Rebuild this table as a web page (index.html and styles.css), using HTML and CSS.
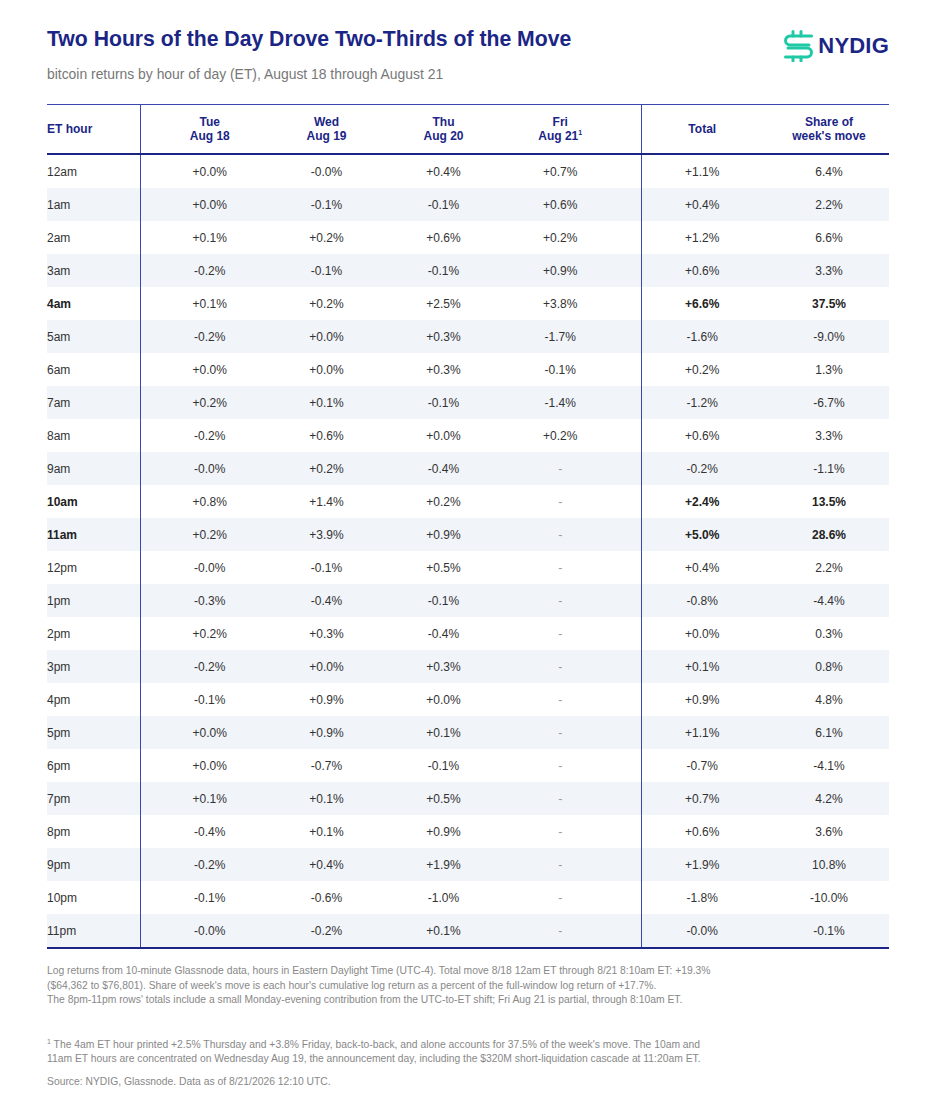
FILE: index.html
```html
<!DOCTYPE html>
<html>
<head>
<meta charset="utf-8">
<link rel="stylesheet" href="styles.css">
</head>
<body>
<div class="page">
  <header class="head">
    <div class="titles">
      <h1 class="title">Two Hours of the Day Drove Two-Thirds of the Move</h1>
      <p class="subtitle">bitcoin returns by hour of day (ET), August 18 through August 21</p>
    </div>
    <div class="logo">
      <svg class="logo-mark" width="31" height="32" viewBox="0 0 31 32" fill="none" stroke="#20c9a6" stroke-width="3" stroke-linecap="round" stroke-linejoin="round">
        <path d="M28.5 6 H7 a4.5 4.5 0 0 0 -4.5 4.5 v0 a4.5 4.5 0 0 0 4.5 4.5 H26"/>
        <path d="M5 18 H24 a4.5 4.5 0 0 1 4.5 4.5 v0 a4.5 4.5 0 0 1 -4.5 4.5 H2.5"/>
        <path d="M10 1.5 V6 M18 1.5 V6 M10 27 V31 M18 27 V31"/>
      </svg>
      <span class="logo-text">NYDIG</span>
    </div>
  </header>

  <table class="grid">
    <colgroup>
      <col class="c-hour"><col class="c-tue"><col class="c-mid"><col class="c-mid"><col class="c-fri"><col class="c-total"><col class="c-share">
    </colgroup>
    <thead>
      <tr>
        <th class="hour">ET hour</th>
        <th class="tue">Tue<br>Aug 18</th>
        <th>Wed<br>Aug 19</th>
        <th>Thu<br>Aug 20</th>
        <th class="fri">Fri<br>Aug 21<sup>1</sup></th>
        <th class="total">Total</th>
        <th>Share of<br>week's move</th>
      </tr>
    </thead>
    <tbody>
      <tr><td class="hour">12am</td><td class="tue">+0.0%</td><td>-0.0%</td><td>+0.4%</td><td class="fri">+0.7%</td><td class="total">+1.1%</td><td>6.4%</td></tr>
      <tr><td class="hour">1am</td><td class="tue">+0.0%</td><td>-0.1%</td><td>-0.1%</td><td class="fri">+0.6%</td><td class="total">+0.4%</td><td>2.2%</td></tr>
      <tr><td class="hour">2am</td><td class="tue">+0.1%</td><td>+0.2%</td><td>+0.6%</td><td class="fri">+0.2%</td><td class="total">+1.2%</td><td>6.6%</td></tr>
      <tr><td class="hour">3am</td><td class="tue">-0.2%</td><td>-0.1%</td><td>-0.1%</td><td class="fri">+0.9%</td><td class="total">+0.6%</td><td>3.3%</td></tr>
      <tr class="hi"><td class="hour">4am</td><td class="tue">+0.1%</td><td>+0.2%</td><td>+2.5%</td><td class="fri">+3.8%</td><td class="total">+6.6%</td><td>37.5%</td></tr>
      <tr><td class="hour">5am</td><td class="tue">-0.2%</td><td>+0.0%</td><td>+0.3%</td><td class="fri">-1.7%</td><td class="total">-1.6%</td><td>-9.0%</td></tr>
      <tr><td class="hour">6am</td><td class="tue">+0.0%</td><td>+0.0%</td><td>+0.3%</td><td class="fri">-0.1%</td><td class="total">+0.2%</td><td>1.3%</td></tr>
      <tr><td class="hour">7am</td><td class="tue">+0.2%</td><td>+0.1%</td><td>-0.1%</td><td class="fri">-1.4%</td><td class="total">-1.2%</td><td>-6.7%</td></tr>
      <tr><td class="hour">8am</td><td class="tue">-0.2%</td><td>+0.6%</td><td>+0.0%</td><td class="fri">+0.2%</td><td class="total">+0.6%</td><td>3.3%</td></tr>
      <tr><td class="hour">9am</td><td class="tue">-0.0%</td><td>+0.2%</td><td>-0.4%</td><td class="fri na">-</td><td class="total">-0.2%</td><td>-1.1%</td></tr>
      <tr class="hi"><td class="hour">10am</td><td class="tue">+0.8%</td><td>+1.4%</td><td>+0.2%</td><td class="fri na">-</td><td class="total">+2.4%</td><td>13.5%</td></tr>
      <tr class="hi"><td class="hour">11am</td><td class="tue">+0.2%</td><td>+3.9%</td><td>+0.9%</td><td class="fri na">-</td><td class="total">+5.0%</td><td>28.6%</td></tr>
      <tr><td class="hour">12pm</td><td class="tue">-0.0%</td><td>-0.1%</td><td>+0.5%</td><td class="fri na">-</td><td class="total">+0.4%</td><td>2.2%</td></tr>
      <tr><td class="hour">1pm</td><td class="tue">-0.3%</td><td>-0.4%</td><td>-0.1%</td><td class="fri na">-</td><td class="total">-0.8%</td><td>-4.4%</td></tr>
      <tr><td class="hour">2pm</td><td class="tue">+0.2%</td><td>+0.3%</td><td>-0.4%</td><td class="fri na">-</td><td class="total">+0.0%</td><td>0.3%</td></tr>
      <tr><td class="hour">3pm</td><td class="tue">-0.2%</td><td>+0.0%</td><td>+0.3%</td><td class="fri na">-</td><td class="total">+0.1%</td><td>0.8%</td></tr>
      <tr><td class="hour">4pm</td><td class="tue">-0.1%</td><td>+0.9%</td><td>+0.0%</td><td class="fri na">-</td><td class="total">+0.9%</td><td>4.8%</td></tr>
      <tr><td class="hour">5pm</td><td class="tue">+0.0%</td><td>+0.9%</td><td>+0.1%</td><td class="fri na">-</td><td class="total">+1.1%</td><td>6.1%</td></tr>
      <tr><td class="hour">6pm</td><td class="tue">+0.0%</td><td>-0.7%</td><td>-0.1%</td><td class="fri na">-</td><td class="total">-0.7%</td><td>-4.1%</td></tr>
      <tr><td class="hour">7pm</td><td class="tue">+0.1%</td><td>+0.1%</td><td>+0.5%</td><td class="fri na">-</td><td class="total">+0.7%</td><td>4.2%</td></tr>
      <tr><td class="hour">8pm</td><td class="tue">-0.4%</td><td>+0.1%</td><td>+0.9%</td><td class="fri na">-</td><td class="total">+0.6%</td><td>3.6%</td></tr>
      <tr><td class="hour">9pm</td><td class="tue">-0.2%</td><td>+0.4%</td><td>+1.9%</td><td class="fri na">-</td><td class="total">+1.9%</td><td>10.8%</td></tr>
      <tr><td class="hour">10pm</td><td class="tue">-0.1%</td><td>-0.6%</td><td>-1.0%</td><td class="fri na">-</td><td class="total">-1.8%</td><td>-10.0%</td></tr>
      <tr><td class="hour">11pm</td><td class="tue">-0.0%</td><td>-0.2%</td><td>+0.1%</td><td class="fri na">-</td><td class="total">-0.0%</td><td>-0.1%</td></tr>
    </tbody>
  </table>

  <div class="notes">
    <p class="note">Log returns from 10-minute Glassnode data, hours in Eastern Daylight Time (UTC-4). Total move 8/18 12am ET through 8/21 8:10am ET: +19.3%<br>($64,362 to $76,801). Share of week's move is each hour's cumulative log return as a percent of the full-window log return of +17.7%.<br>The 8pm-11pm rows' totals include a small Monday-evening contribution from the UTC-to-ET shift; Fri Aug 21 is partial, through 8:10am ET.</p>
    <p class="note footnote"><sup>1</sup> The 4am ET hour printed +2.5% Thursday and +3.8% Friday, back-to-back, and alone accounts for 37.5% of the week's move. The 10am and<br>11am ET hours are concentrated on Wednesday Aug 19, the announcement day, including the $320M short-liquidation cascade at 11:20am ET.</p>
    <p class="note source">Source: NYDIG, Glassnode. Data as of 8/21/2026 12:10 UTC.</p>
  </div>
</div>
</body>
</html>
```

FILE: styles.css
```css
html, body {
  margin: 0;
  padding: 0;
  background: #ffffff;
}

body {
  font-family: "Liberation Sans", Arial, sans-serif;
  color: #333333;
}

.page {
  width: 842px;
  padding: 26px 47px 0 47px;
}

.head {
  display: flex;
  justify-content: space-between;
  align-items: flex-start;
}

.title {
  margin: 0;
  font-size: 21.2px;
  line-height: 26px;
  font-weight: 700;
  color: #1b2586;
}

.subtitle {
  margin: 13px 0 0 0;
  font-size: 13.9px;
  line-height: 18px;
  color: #777777;
}

.logo {
  display: flex;
  align-items: center;
  gap: 4px;
  margin-top: 4px;
}

.logo-mark {
  display: block;
}

.logo-text {
  font-size: 22px;
  font-weight: 700;
  color: #1b2586;
  letter-spacing: 0.2px;
}

.grid {
  margin-top: 21px;
  width: 842px;
  border-collapse: collapse;
  table-layout: fixed;
  font-size: 12px;
}

.c-hour { width: 93px; }
.c-tue { width: 128px; }
.c-mid { width: 117px; }
.c-fri { width: 139px; }
.c-total { width: 128px; }
.c-share { width: 120px; }

.grid thead tr {
  border-top: 1px solid #3848b0;
  border-bottom: 2px solid #1b2586;
}

.grid th {
  height: 48px;
  padding: 0;
  font-weight: 700;
  color: #1b2586;
  text-align: center;
  line-height: 14px;
  vertical-align: middle;
}

.grid th sup {
  font-size: 7px;
  line-height: 0;
  vertical-align: 5px;
}

.grid td {
  height: 33px;
  padding: 0;
  text-align: center;
  vertical-align: middle;
  color: #333333;
}

.grid tbody tr:nth-child(even) td {
  background: #f1f4f9;
}

.grid tbody tr:last-child {
  border-bottom: 2px solid #1b2586;
}

.grid .hour {
  text-align: left;
  border-right: 1px solid #3848b0;
}

.grid .tue {
  padding-left: 11px;
}

.grid .fri {
  padding-right: 22px;
}

.grid .total {
  border-left: 1px solid #3848b0;
  padding-right: 6px;
}

.grid td.na {
  color: #999999;
}

.grid tr.hi td {
  font-weight: 700;
  color: #222222;
}

.grid tr.hi td.tue,
.grid tr.hi td:nth-child(3),
.grid tr.hi td:nth-child(4),
.grid tr.hi td.fri {
  font-weight: 400;
  color: #333333;
}

.grid tr.hi td.na {
  color: #999999;
}

.notes {
  padding-top: 15px;
}

.note {
  margin: 0;
  font-size: 10.33px;
  line-height: 14.5px;
  color: #888888;
}

.note sup {
  font-size: 7px;
  line-height: 0;
  vertical-align: 4px;
}

.footnote {
  margin-top: 30px;
}

.source {
  margin-top: 8px;
}
```
